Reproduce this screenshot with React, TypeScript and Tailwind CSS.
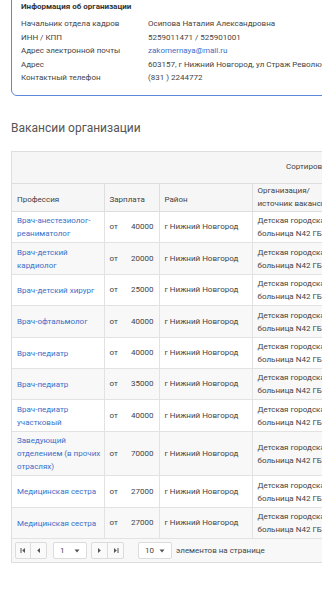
import React from "react";

const rows = [
  { p: ["Врач-анестезиолог-", "реаниматолог"], s: "40000", h: "h-[31px]" },
  { p: ["Врач-детский", "кардиолог"], s: "20000", h: "h-[32px]" },
  { p: ["Врач-детский хирург"], s: "25000", h: "h-[31px]" },
  { p: ["Врач-офтальмолог"], s: "40000", h: "h-[32px]" },
  { p: ["Врач-педиатр"], s: "40000", h: "h-[31px]" },
  { p: ["Врач-педиатр"], s: "35000", h: "h-[31px]" },
  { p: ["Врач-педиатр", "участковый"], s: "40000", h: "h-[32px]" },
  { p: ["Заведующий", "отделением (в прочих", "отраслях)"], s: "70000", h: "h-[44px]" },
  { p: ["Медицинская сестра"], s: "27000", h: "h-[32px]" },
  { p: ["Медицинская сестра"], s: "27000", h: "h-[31px]" },
];

const info: [string, string, boolean?][] = [
  ["Начальник отдела кадров", "Осипова Наталия Александровна"],
  ["ИНН / КПП", "5259011471 / 525901001"],
  ["Адрес электронной почты", "zakomernaya@mail.ru", true],
  ["Адрес", "603157, г Нижний Новгород, ул Страж Революции, д 5"],
  ["Контактный телефон", "(831 ) 2244772"],
];

function Tri({ dir, bar }: { dir: "l" | "r"; bar?: boolean }) {
  return (
    <svg width="7" height="7" viewBox="0 0 7 7">
      {dir === "l" ? (
        <>
          {bar && <rect x="0.5" y="1" width="1" height="5" fill="#555" />}
          <polygon points="5,1 5,6 2.2,3.5" fill="#555" />
        </>
      ) : (
        <>
          <polygon points="2,1 2,6 4.8,3.5" fill="#555" />
          {bar && <rect x="5.5" y="1" width="1" height="5" fill="#555" />}
        </>
      )}
    </svg>
  );
}

function Caret() {
  return (
    <svg width="6" height="4" viewBox="0 0 6 4">
      <polygon points="0.5,0.5 5.5,0.5 3,3.5" fill="#555" />
    </svg>
  );
}

export default function App() {
  return (
    <div
      className="w-[322px] h-[600px] overflow-hidden bg-white text-[#333]"
      style={{ fontFamily: "Roboto, 'Noto Sans', sans-serif" }}
    >
      <div className="w-[600px]">
        {/* Info box */}
        <div className="ml-[11px] -mt-[10px] w-[500px] border border-[#5b88d8] rounded-bl-[6px] pl-[9px] pt-[10px] pb-[10px] text-[8px]">
          <div className="h-[12px] leading-[12px] font-bold text-[#333]">Информация об организации</div>
          <div className="mt-[4px]">
            {info.map(([k, v, link], i) => (
              <div key={i} className="flex h-[13.5px] leading-[13.5px] whitespace-nowrap">
                <div className="w-[127px] text-[#444]">{k}</div>
                <div className={link ? "text-[#3a6fc8]" : "text-[#444]"}>{v}</div>
              </div>
            ))}
          </div>
        </div>

        {/* Title */}
        <div className="ml-[11px] mt-[24px] text-[12px] leading-[16px] text-[#555]">Вакансии организации</div>

        {/* Table */}
        <div className="ml-[11px] mt-[15px] w-[560px] border border-[#dedede] text-[8px]">
          <table className="table-fixed border-collapse w-full">
            <colgroup>
              <col className="w-[92px]" />
              <col className="w-[55px]" />
              <col className="w-[93px]" />
              <col />
            </colgroup>
            <thead>
              <tr className="h-[32px] bg-[#f6f6f6]">
                <th colSpan={4} className="border-b border-[#dedede] font-normal text-left pl-[274px] text-[#444]">
                  Сортировать по
                </th>
              </tr>
              <tr className="h-[27px] bg-[#f6f6f6] text-[#444]">
                <th className="border-r border-b border-[#dedede] font-normal text-left align-bottom pl-[5px] pb-[5px] leading-[13px]">Профессия</th>
                <th className="border-r border-b border-[#dedede] font-normal text-left align-bottom pl-[5px] pb-[5px] leading-[13px]">Зарплата</th>
                <th className="border-r border-b border-[#dedede] font-normal text-left align-bottom pl-[5px] pb-[5px] leading-[13px]">Район</th>
                <th className="border-b border-[#dedede] font-normal text-left align-bottom pl-[5px] pb-[1px] leading-[13px] whitespace-nowrap">
                  <div>Организация/</div>
                  <div>источник вакансии</div>
                </th>
              </tr>
            </thead>
            <tbody>
              {rows.map((r, i) => (
                <tr key={i} className={`${r.h} ${i % 2 === 1 ? "bg-[#f8f8f8]" : "bg-white"}`}>
                  <td className="border-r border-b border-[#e2e2e2] pl-[5px] pr-[3px] align-middle leading-[13px] text-[#3a6fc8] whitespace-nowrap">
                    {r.p.map((l, j) => (
                      <div key={j}>{l}</div>
                    ))}
                  </td>
                  <td className="border-r border-b border-[#e2e2e2] pl-[5px] pr-[5px] align-middle text-[#444]">
                    <div className="flex justify-between">
                      <span>от</span>
                      <span>{r.s}</span>
                    </div>
                  </td>
                  <td className="border-r border-b border-[#e2e2e2] pl-[5px] align-middle text-[#444] whitespace-nowrap">
                    г Нижний Новгород
                  </td>
                  <td className="border-b border-[#e2e2e2] pl-[5px] align-middle leading-[13px] text-[#444] whitespace-nowrap">
                    <div>Детская городская клиническая</div>
                    <div>больница N42 ГБУЗ НО</div>
                  </td>
                </tr>
              ))}
            </tbody>
          </table>
          {/* Pager */}
          <div className="h-[23px] bg-[#f8f8f8] flex items-center pl-[3px] text-[8px] text-[#444]">
            <div className="flex h-[17px] border border-[#dcdcdc] rounded-[2px] bg-[#fafafa]">
              <div className="w-[15px] flex items-center justify-center border-r border-[#dcdcdc]"><Tri dir="l" bar /></div>
              <div className="w-[15px] flex items-center justify-center"><Tri dir="l" /></div>
            </div>
            <div className="ml-[6px] flex h-[17px] w-[34px] items-center justify-between border border-[#dcdcdc] rounded-[2px] bg-white pl-[6px] pr-[6px]">
              <span>1</span>
              <Caret />
            </div>
            <div className="ml-[4px] flex h-[17px] border border-[#dcdcdc] rounded-[2px] bg-[#fafafa]">
              <div className="w-[16px] flex items-center justify-center border-r border-[#dcdcdc]"><Tri dir="r" /></div>
              <div className="w-[15px] flex items-center justify-center"><Tri dir="r" bar /></div>
            </div>
            <div className="ml-[14px] flex h-[17px] w-[34px] items-center justify-between border border-[#dcdcdc] rounded-[2px] bg-white pl-[6px] pr-[6px]">
              <span>10</span>
              <Caret />
            </div>
            <span className="ml-[4px] whitespace-nowrap">элементов на странице</span>
          </div>
        </div>
      </div>
    </div>
  );
}
